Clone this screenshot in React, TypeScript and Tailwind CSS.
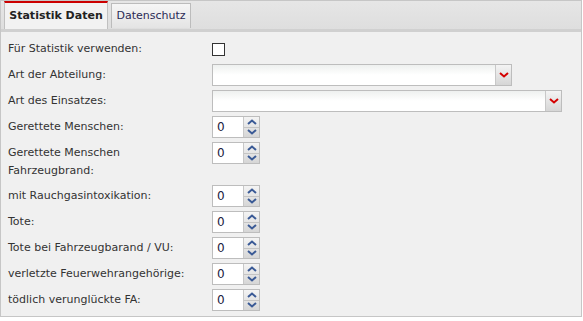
import React from 'react';

const font = { fontFamily: 'Tahoma, "DejaVu Sans", sans-serif' };

const Chevron: React.FC<{ dir: 'up' | 'down'; color: string }> = ({ dir, color }) => (
  <svg width="10" height="6" viewBox="0 0 10 6" className="block">
    <path
      d={dir === 'up' ? 'M1 5 L5 1.5 L9 5' : 'M1 1 L5 4.5 L9 1'}
      fill="none"
      stroke={color}
      strokeWidth="2"
    />
  </svg>
);

const SelectBox: React.FC<{ width: string }> = ({ width }) => (
  <div className={`flex h-[22px] ${width} border border-[#bdbdbd] bg-white`}>
    <div className="flex-1 bg-gradient-to-b from-[#eef0ef] via-white to-white" />
    <div className="flex w-[16px] items-center justify-center border-l border-[#c8c8c8] bg-gradient-to-b from-[#f4f4f4] to-[#d6d6d6]">
      <Chevron dir="down" color="#d40000" />
    </div>
  </div>
);

const Spinner: React.FC = () => (
  <div className="flex h-[22px] w-[48px] border border-[#bdbdbd]">
    <div className="flex w-[31px] items-center bg-white pl-[4px] text-[12px] text-[#1a1a40]">0</div>
    <div className="flex w-[16px] flex-col border-l border-[#c8c8c8] bg-gradient-to-b from-[#f4f4f4] to-[#d6d6d6]">
      <div className="flex flex-1 items-center justify-center border-b border-[#c4c4c4]">
        <Chevron dir="up" color="#3a5a96" />
      </div>
      <div className="flex flex-1 items-center justify-center">
        <Chevron dir="down" color="#3a5a96" />
      </div>
    </div>
  </div>
);

const Row: React.FC<{ label: React.ReactNode; children: React.ReactNode }> = ({ label, children }) => (
  <div className="flex items-start">
    <div className="w-[204px] pt-[2px] pb-[1px] text-[11px] leading-[18px] text-[#333]">{label}</div>
    {children}
  </div>
);

const spinRows = [
  'mit Rauchgasintoxikation:',
  'Tote:',
  'Tote bei Fahrzeugbarand / VU:',
  'verletzte Feuerwehrangehörige:',
  'tödlich verunglückte FA:',
];

export default function App() {
  return (
    <div className="h-[321px] w-[583px] bg-white" style={font}>
      <div className="h-[317px] w-[582px] border border-[#c6c6c6] bg-[#f0f0f0]">
        <div className="flex h-[31px] items-end gap-[3px] border-b-[3px] border-[#d0d0d0] bg-gradient-to-b from-[#e6e6e6] to-[#dedede] pl-[3px]">
          <div className="flex h-[28px] w-[104px] items-center justify-center border-t-2 border-x border-t-[#cc0000] border-x-[#c0c0c0] bg-[#f2f2f2] text-[11px] font-bold text-[#222]">
            Statistik Daten
          </div>
          <div className="mb-[1px] flex h-[25px] w-[80px] items-center justify-center border border-b-0 border-[#bcbcbc] bg-gradient-to-b from-[#f6f6f6] to-[#e4e4e4] text-[11px] text-[#2a2a55]">
            Datenschutz
          </div>
        </div>
        <div className="flex flex-col gap-[4px] pl-[7px] pt-[6px]">
          <div className="flex h-[22px] items-center">
            <div className="w-[204px] text-[11px] text-[#333]">Für Statistik verwenden:</div>
            <div className="h-[13px] w-[13px] border border-[#333] bg-white" />
          </div>
          <Row label="Art der Abteilung:">
            <SelectBox width="w-[300px]" />
          </Row>
          <Row label="Art des Einsatzes:">
            <SelectBox width="w-[350px]" />
          </Row>
          <Row label="Gerettete Menschen:">
            <Spinner />
          </Row>
          <Row
            label={
              <>
                Gerettete Menschen
                <br />
                Fahrzeugbrand:
              </>
            }
          >
            <Spinner />
          </Row>
          {spinRows.map((l) => (
            <Row key={l} label={l}>
              <Spinner />
            </Row>
          ))}
        </div>
      </div>
    </div>
  );
}
